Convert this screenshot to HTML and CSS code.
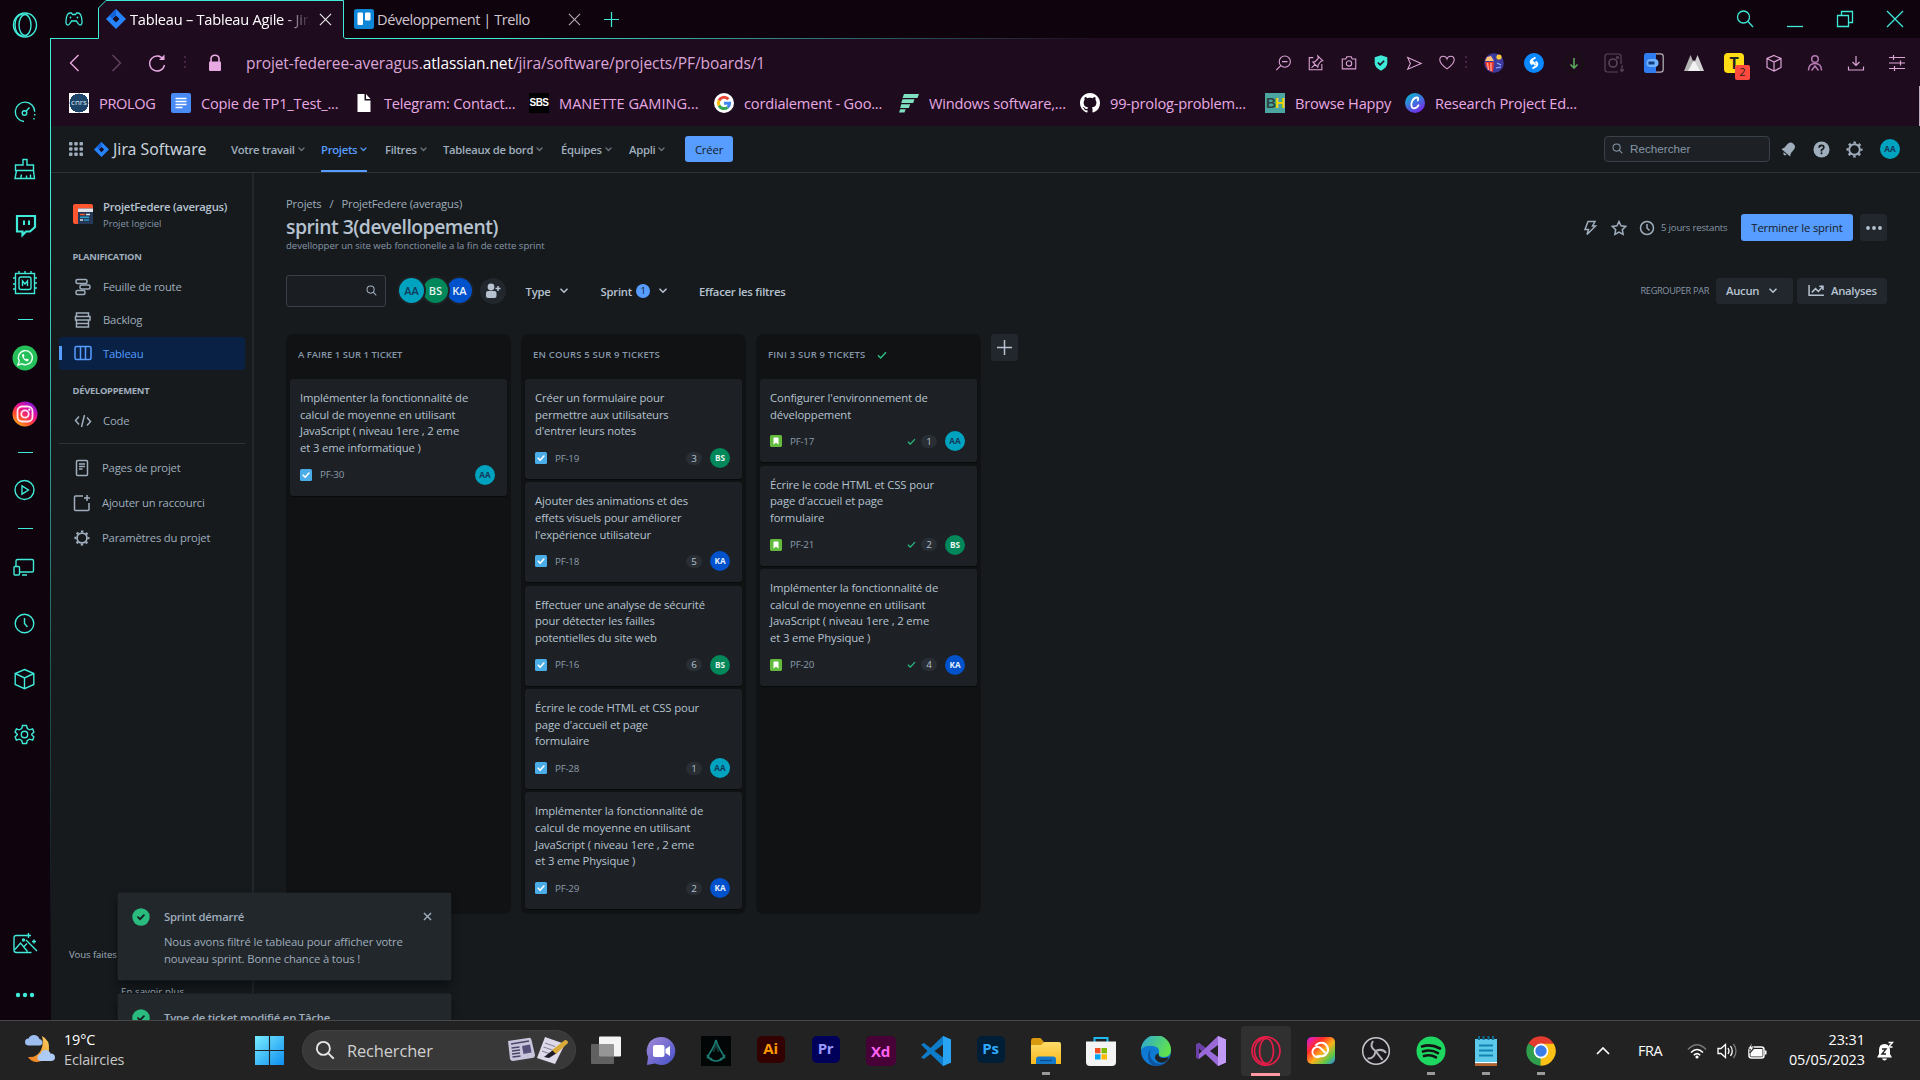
FILE: index.html
```html
<!DOCTYPE html>
<html lang="fr">
<head>
<meta charset="utf-8">
<title>Tableau – Tableau Agile - Jira</title>
<link rel="stylesheet" href="styles.css">
</head>
<body>
<svg class="defs" aria-hidden="true">
  <defs>
    <linearGradient id="fadeX" gradientUnits="userSpaceOnUse" x1="500" y1="0" x2="1100" y2="0"><stop offset="0" stop-color="#3fead8"/><stop offset="1" stop-color="#3fead8" stop-opacity="0"/></linearGradient>
    <linearGradient id="fadeY" gradientUnits="userSpaceOnUse" x1="0" y1="200" x2="0" y2="960"><stop offset="0" stop-color="#3fead8"/><stop offset="1" stop-color="#3fead8" stop-opacity="0"/></linearGradient>
    <linearGradient id="insta" x1=".1" y1="1" x2=".8" y2="0"><stop offset="0" stop-color="#ffc21a"/><stop offset=".35" stop-color="#ff4a2e"/><stop offset=".65" stop-color="#e6109a"/><stop offset="1" stop-color="#7a1be0"/></linearGradient>
    <linearGradient id="win" x1="0" y1="0" x2="1" y2="1"><stop offset="0" stop-color="#78ecff"/><stop offset="1" stop-color="#0e8ff0"/></linearGradient>
    <linearGradient id="teams" x1="0" y1="0" x2="1" y2="1"><stop offset="0" stop-color="#a58bd8"/><stop offset="1" stop-color="#4450c8"/></linearGradient>
    <linearGradient id="edgeG" x1="0" y1="0" x2="1" y2=".4"><stop offset="0" stop-color="#2ba6dd"/><stop offset="1" stop-color="#5fe04e"/></linearGradient>
    <linearGradient id="cc" x1="0" y1="0" x2="1" y2="1"><stop offset="0" stop-color="#d41cf0"/><stop offset=".3" stop-color="#ff2a2a"/><stop offset=".55" stop-color="#ffb01a"/><stop offset=".8" stop-color="#5ac84a"/><stop offset="1" stop-color="#2a80ff"/></linearGradient>
    <linearGradient id="canva" x1="0" y1="0" x2=".6" y2="1"><stop offset="0" stop-color="#00c4d0"/><stop offset="1" stop-color="#7330e8"/></linearGradient>
    <linearGradient id="fold" x1="0" y1="0" x2="0" y2="1"><stop offset="0" stop-color="#ffdc6a"/><stop offset="1" stop-color="#f8b81c"/></linearGradient>
    <linearGradient id="moon" x1="1" y1="0" x2="0" y2="1"><stop offset="0" stop-color="#f7d060"/><stop offset="1" stop-color="#f07a1a"/></linearGradient>
    <symbol id="chev" viewBox="0 0 8 6"><path d="M1 1.2l3 3 3-3" fill="none" stroke="currentColor" stroke-width="1.6" stroke-linecap="round"/></symbol>
    <symbol id="x" viewBox="0 0 14 14"><path d="M1 1l12 12M13 1L1 13" fill="none" stroke="currentColor" stroke-width="1.2"/></symbol>
    <symbol id="xb" viewBox="0 0 14 14"><path d="M1.500 1.500l11 11M12.500 1.500l-11 11" fill="none" stroke="currentColor" stroke-width="2.200"/></symbol>
    <symbol id="mag" viewBox="0 0 16 16"><g fill="none" stroke="currentColor" stroke-width="1.5"><circle cx="6.7" cy="6.7" r="5.2"/><path d="M10.5 10.5l4.5 4.5"/></g></symbol>
    <symbol id="jira" viewBox="0 0 20 20"><path d="M10 0l10 10-10 10L0 10z" fill="#2684ff"/><path d="M10 6.5L13.5 10 10 13.500 6.500 10z" fill="#1b0d20"/><path d="M10 0v6.500L6.500 10 3.300 6.700z" fill="#1460d8"/></symbol>
    <symbol id="task" viewBox="0 0 12 12"><rect width="12" height="12" rx="1.500" fill="#4bade8"/><path d="M3.200 6.200l2 2 3.700-4.200" fill="none" stroke="#fff" stroke-width="1.600" stroke-linecap="round"/></symbol>
    <symbol id="story" viewBox="0 0 12 12"><rect width="12" height="12" rx="1.500" fill="#63ba3c"/><path d="M3.500 3.300q0-.8.8-.8h3.400q.8 0 .8.800v6.500L6 7.500 3.500 9.800z" fill="#fff"/></symbol>
    <symbol id="tick" viewBox="0 0 10 8"><path d="M1 4.300L3.600 7 9 1.300" fill="none" stroke="#2abb7f" stroke-width="1.500"/></symbol>
    <symbol id="ok" viewBox="0 0 18 18"><circle cx="9" cy="9" r="8.700" fill="#2abb7f"/><path d="M6 9.100l2.100 2.100 3.800-4" fill="none" stroke="#161a1d" stroke-width="1.800" stroke-linecap="round"/></symbol>
    <symbol id="cog" viewBox="0 0 18 18"><circle cx="9" cy="9" r="5.600" fill="none" stroke="currentColor" stroke-width="2"/><circle cx="9" cy="9" r="7.400" fill="none" stroke="currentColor" stroke-width="2.200" stroke-dasharray="2.700 3.110" stroke-dashoffset="1.350"/></symbol>
  </defs>
</svg>

<div class="screen">
  <div class="browser">
    <aside class="rail">
      <svg class="ri opera" viewBox="0 0 26 26"><ellipse cx="13" cy="13" rx="11.500" ry="12"/><ellipse cx="13" cy="13" rx="6" ry="10.500"/><path d="M11 1.500C5 3 3 8 3 13s2.500 10 8 11.500"/></svg>
      <svg class="ri gauge" viewBox="0 0 26 26"><path d="M12 22.500a9.700 9.700 0 1 1 10.700-9.700"/><circle cx="12.500" cy="14" r="2.300"/><path d="M14 12.300l3.500-3.800M22.700 15v1.500M22 19v1.500"/></svg>
      <svg class="ri broom" viewBox="0 0 26 26"><path d="M11 3.500h4V9h6.500v5.500h-18V9H11zM4.500 14.500l-1.500 8h19.500l-1-8M9.500 18.500l-.8 4M14.500 19.500v3M18.500 18.500v4"/></svg>
      <svg class="ri twitch" viewBox="0 0 26 26"><path d="M5 4h18v11l-5 4.500h-4L10.500 23v-3.500H5z" stroke-width="2.200"/><path d="M12 8.500v4.500M17 8.500v4.500" stroke-width="2"/></svg>
      <svg class="ri chip" viewBox="0 0 26 26"><rect x="3.500" y="3.500" width="19" height="20"/><rect x="7" y="7" width="12" height="12.500" rx="2"/><path d="M10.500 16v-5l2.500 3 2.500-3v5M7 3.500V1M13 3.500V1M19 3.500V1M3.500 8H1M3.500 14H1M3.500 19H1M22.500 8H25M22.500 13H25M22.500 18H25"/></svg>
      <i class="dash d1"></i>
      <svg class="ri wa" viewBox="0 0 26 26"><circle cx="13" cy="13" r="12.500" fill="#25c05a" stroke="none"/><path d="M6 20l1.200-4A7 7 0 1 1 10 18.800z" stroke="#e8fff0"/><path d="M10 9.500c-.5 3 3 7 6 6.800l.8-1.800-2-1-1 .8c-1-.5-1.800-1.500-2.200-2.300l.9-.9-.7-2z" fill="#fff" stroke="none"/></svg>
      <svg class="ri ig" viewBox="0 0 26 26"><circle cx="13" cy="13" r="12.500" fill="url(#insta)" stroke="none"/><g stroke="#ffe6f0" stroke-width="1.800"><rect x="5.500" y="5.500" width="15" height="15" rx="4.500"/><circle cx="13" cy="13" r="3.700"/></g><circle cx="17.300" cy="8.700" r="1.100" fill="#fff" stroke="none"/></svg>
      <i class="dash d2"></i>
      <svg class="ri play" viewBox="0 0 26 26"><circle cx="12.500" cy="13" r="9.500"/><path d="M10 8.800l6.500 4.200-6.500 4.200z"/></svg>
      <i class="dash d3"></i>
      <svg class="ri devices" viewBox="0 0 26 26"><path d="M4 11V6q0-1.500 1.500-1.500H20q1.500 0 1.500 1.500v9.500q0 1.500-1.500 1.500H8M10 20h5"/><rect x="2" y="11.500" width="5.500" height="8.500" rx="1"/></svg>
      <svg class="ri clock" viewBox="0 0 26 26"><circle cx="12.500" cy="13.500" r="9.300"/><path d="M12.500 8v5.500l3 3.500"/></svg>
      <svg class="ri box" viewBox="0 0 26 26"><path d="M12.500 3.500l9.300 4v11l-9.300 4.200-9.300-4.200v-11zM3.200 7.500l9.300 4.500 9.300-4.500M12.500 12v10.700"/></svg>
      <svg class="ri gear" viewBox="0 0 26 26"><circle cx="12.500" cy="13.500" r="3.200"/><path d="M10.500 4.500h4l.8 3 2.400 1.300 2.900-.9 1.300 3.200-2.200 2.200v.4l2.200 2.200-1.300 3.200-2.900-.9-2.400 1.300-.8 3h-4l-.8-3-2.400-1.300-2.900.9-1.300-3.200 2.200-2.200v-.4l-2.200-2.200 1.300-3.200 2.900.9 2.400-1.300z"/></svg>
      <svg class="ri pic" viewBox="0 0 26 26"><path d="M15 4.500H4.500Q2 4.500 2 7v12q0 2.500 2.500 2.500h15M3 18.500l5.500-6.500 7 8.500M12 15.500l3-3M14 9l11 11"/><circle cx="11.500" cy="9" r="1"/><path d="M16.500 2v5M14 4.500h5M22 8.500v4M20 10.500h4"/></svg>
      <svg class="ri more" viewBox="0 0 26 26"><g fill="#3fead8" stroke="none"><circle cx="6" cy="13" r="2.200"/><circle cx="13" cy="13" r="2.200"/><circle cx="20" cy="13" r="2.200"/></g></svg>
    </aside>

    <div class="window">
      <header class="chrome">
        <div class="tabs">
          <svg class="pad" viewBox="0 0 18 14"><path d="M5 1h1.500l1 1.500h3L11.500 1H13q3.500 0 4 8 .2 4-1.800 4-1.500 0-3.700-4h-5q-2.200 4-3.700 4-2 0-1.800-4Q1.500 1 5 1z" fill="none" stroke="#3fead8" stroke-width="1.300"/><circle cx="5.500" cy="5.500" r=".9" fill="#3fead8"/><circle cx="12.500" cy="5.500" r=".9" fill="#3fead8"/></svg>
          <div class="tab active"><svg class="fav"><use href="#jira"/></svg><span class="label">Tableau – Tableau Agile - Jira</span><svg class="close"><use href="#x"/></svg></div>
          <div class="tab"><svg class="fav" viewBox="0 0 20 20"><rect width="20" height="20" rx="2.500" fill="#0e86d8"/><rect x="3.500" y="3.500" width="5.500" height="12.500" rx="1" fill="#fff"/><rect x="11" y="3.500" width="5.500" height="8" rx="1" fill="#fff"/></svg><span class="label">Développement | Trello</span><svg class="close"><use href="#x"/></svg></div>
          <svg class="plus" viewBox="0 0 16 16"><path d="M8 0v16M0 8h16" stroke="#3fead8" stroke-width="1.300"/></svg>
          <div class="winctl">
            <svg viewBox="0 0 18 18"><circle cx="7.500" cy="7" r="6"/><path d="M12 11.500l5 5.500"/></svg>
            <svg viewBox="0 0 18 18"><path d="M1 16.500h16"/></svg>
            <svg viewBox="0 0 18 18"><path d="M1.500 5.500h11v11h-11zM5.500 5.500v-4h11v11h-4"/></svg>
            <svg viewBox="0 0 18 18"><path d="M1 1l16 16M17 1L1 17"/></svg>
          </div>
        </div>
        <div class="address">
          <div class="navbtns">
            <svg viewBox="0 0 20 20"><path d="M13.500 2L5.500 10l8 8"/></svg>
            <svg viewBox="0 0 20 20" class="off"><path d="M6.500 2l8 8-8 8"/></svg>
            <svg viewBox="0 0 20 20"><path d="M16.500 6.500A7.500 7.500 0 1 0 17.500 12"/><path d="M12 7h5.500V1.500z" fill="#e7a9e2" stroke="none"/></svg>
          </div>
          <i class="dots"></i>
          <svg class="lock" viewBox="0 0 14 18"><path d="M3 9V5q0-3.800 4-3.800T11 5v4" fill="none" stroke="#e7a9e2" stroke-width="1.600"/><rect x="1" y="7.500" width="12" height="9.500" rx="1" fill="#e7a9e2"/></svg>
          <div class="url">projet-federee-averagus.<b>atlassian.net</b>/jira/software/projects/PF/boards/1</div>
          <div class="tools small">
            <svg viewBox="0 0 20 20"><circle cx="12" cy="8.500" r="6.200"/><path d="M7.500 13l-5 5M9 8.500h6"/></svg>
            <svg viewBox="0 0 20 20"><path d="M7 4H2.500v13.500h14V11M12 2l5.500 5.500-2 .5-3 4-.5 2.500L6.500 9 9 8.500l3.500-3.500zM9 11.500L5 15.500"/></svg>
            <svg viewBox="0 0 20 20"><path d="M2.500 5.500h4l1-2.500h5l1 2.500h4v11h-15z"/><circle cx="10" cy="10.500" r="3"/></svg>
            <svg viewBox="0 0 20 20"><path d="M10 1.500l7 2v6.500q0 5-7 8.500-7-3.500-7-8.500V3.500z" fill="#3fead8" stroke="none"/><path d="M6.500 9.500l2.500 2.500 4.500-4.500" stroke="#1e0b1e" stroke-width="1.800"/></svg>
            <svg viewBox="0 0 20 20"><path d="M3 4l15 6.500L3 17l3-6.500z"/></svg>
            <svg viewBox="0 0 20 20"><path d="M10 16.500Q2 11 2 6.500 2 2.500 5.800 2.500 9 2.500 10 5.500 11 2.500 14.200 2.500 18 2.500 18 6.500 18 11 10 16.500z"/></svg>
          </div>
          <i class="dots"></i>
          <div class="tools ext">
            <svg viewBox="0 0 20 20"><circle cx="10" cy="10" r="9.800" fill="#3c3a9e" stroke="none"/><path d="M1 9h9l-1 10Q2 17 1 9z" fill="#f0382a" stroke="none"/><path d="M3.500 10l1 7M7 10v8" stroke="#ffb0a0"/><path d="M1 8l2-4 4-1 3 5z" fill="#ffc27a" stroke="none"/><circle cx="15" cy="4" r="2.600" fill="#ffc83a" stroke="none"/><path d="M13 10l4 2M12 15l5-1" stroke="#8fb4ff"/></svg>
            <svg viewBox="0 0 20 20"><circle cx="10" cy="10" r="10" fill="#0a88ff" stroke="none"/><path d="M11.500 4.500l-4 2.500q-2 2.500 1 4.500M8.500 15.500l4-2.500q2-2.500-1-4.500M8 8l3.500 4" stroke="#fff" stroke-width="2"/></svg>
            <svg viewBox="0 0 20 20"><circle cx="10" cy="10" r="9.300" stroke="#17120f" stroke-dasharray="8 3" stroke-width="1.500"/><path d="M10 5v10M6.500 11.500L10 15l3.500-3.500" stroke="#5aa85a" stroke-width="1.600"/></svg>
            <svg viewBox="0 0 20 20"><path d="M14 19H3.500Q1 19 1 16.500v-13Q1 1 3.500 1h11Q17 1 17 3.500V11M18 12v6M16 16.500l2 2 2-2" stroke="#594659"/><circle cx="9" cy="10" r="4" stroke="#594659" stroke-width="1.600"/><circle cx="13.500" cy="4.500" r="1" stroke="#594659"/></svg>
            <svg viewBox="0 0 20 20"><path d="M10 .8h6.500Q19.200.8 19.200 3.500v13q0 2.700-2.700 2.700H10" stroke="#b8b4b8"/><path d="M2.500 0H12v20H2.500Q0 20 0 17.500v-15Q0 0 2.500 0z" fill="#2f7df0" stroke="none"/><rect x="2.500" y="6" width="12" height="8" rx="4" fill="#70b2ff" stroke="none"/><path d="M4.500 8.500h6v3h-6z" fill="#123a80" stroke="none"/></svg>
            <svg viewBox="0 0 20 20"><path d="M0 18L6.500 2l6.500 16z" fill="#b4b4b4" stroke="none"/><path d="M7 18l6.500-16L20 18z" fill="#d0d0d0" stroke="none"/><path d="M4 18L10 7l6 11z" fill="#f2f2f2" stroke="none"/></svg>
            <div class="tx">T<em>2</em></div>
            <svg viewBox="0 0 20 20"><path d="M10 2.500l7 3v9l-7 3.500-7-3.500v-9zM3 5.500l7 3.500 7-3.500M10 9v9"/></svg>
            <svg viewBox="0 0 20 20"><g stroke="#b679b4" stroke-width="1.500"><circle cx="10" cy="6" r="3.300"/><path d="M3.500 17.500q0-7 6.500-7t6.500 7M6.500 17.500l3.500-4.500 3.500 4.500"/></g></svg>
            <svg viewBox="0 0 20 20"><path d="M10 3v9.500M6.500 9l3.500 3.500L13.500 9M2.500 13.500V17h15v-3.500"/></svg>
            <svg viewBox="0 0 20 20"><path d="M2 4.500h16M2 10h16M2 15.500h16M6.500 2v5M13.500 7.500v5M7.500 13v5"/></svg>
          </div>
        </div>
        <div class="bookmarks">
          <a><span class="bi cnrs">cnrs</span>PROLOG</a>
          <a><svg class="bi" viewBox="0 0 20 20"><rect width="20" height="20" rx="2" fill="#4a8af4"/><path d="M4.500 5.500h11M4.500 8.500h11M4.500 11.500h11M4.500 14.500h7" stroke="#fff" stroke-width="1.700"/></svg>Copie de TP1_Test_...</a>
          <a><svg class="bi" viewBox="0 0 20 20"><path d="M3.500 1h7v6.500h6V19h-13z" fill="#fff"/><path d="M12 1l4.500 5H12z" fill="#fff"/></svg>Telegram: Contact...</a>
          <a><span class="bi sbs">SBS</span>MANETTE GAMING...</a>
          <a><svg class="bi" viewBox="0 0 20 20"><circle cx="10" cy="10" r="10" fill="#fff"/><g fill="none" stroke-width="3"><path d="M14.300 6.300A5.600 5.600 0 0 0 5 7.500" stroke="#ea4335"/><path d="M5 7.500a5.600 5.600 0 0 0 0 5" stroke="#fbbc05"/><path d="M5 12.500a5.600 5.600 0 0 0 8.600 1.800" stroke="#34a853"/><path d="M13.600 14.300q2-1.500 2-4.100H10" stroke="#4285f4"/></g></svg>cordialement - Goo...</a>
          <a><svg class="bi" viewBox="0 0 20 20"><path d="M5 1h15l-1.500 4H3.500zM3.500 6.300h12l-1.300 3.700H2.200zM2.200 11.300h9L9.800 15H1.200zM1.200 16.200h5.500L5.500 19.500H0z" fill="#7fe0c0"/></svg>Windows software,...</a>
          <a><svg class="bi" viewBox="0 0 16 16"><path fill="#fff" d="M8 0C3.580 0 0 3.580 0 8c0 3.540 2.290 6.530 5.470 7.590.4.070.55-.17.55-.38 0-.19-.01-.82-.01-1.490-2.010.37-2.530-.49-2.690-.94-.09-.23-.48-.94-.82-1.130-.28-.15-.68-.52-.01-.53.63-.01 1.080.58 1.230.82.72 1.210 1.870.87 2.330.66.07-.52.28-.87.51-1.070-1.780-.2-3.640-.89-3.640-3.950 0-.87.31-1.590.82-2.150-.08-.2-.36-1.020.08-2.120 0 0 .67-.21 2.200.82.64-.18 1.320-.27 2-.27s1.360.09 2 .27c1.530-1.040 2.200-.82 2.200-.82.44 1.100.16 1.920.08 2.120.51.56.82 1.270.82 2.150 0 3.070-1.870 3.750-3.650 3.950.29.25.54.73.54 1.480 0 1.070-.01 1.930-.01 2.200 0 .21.15.46.55.38A8.010 8.010 0 0 0 16 8c0-4.420-3.580-8-8-8z"/></svg>99-prolog-problem...</a>
          <a><span class="bi bh">B<i>H</i></span>Browse Happy</a>
          <a><svg class="bi" viewBox="0 0 20 20"><circle cx="10" cy="10" r="10" fill="url(#canva)"/><path d="M12.800 7.500q1.200-3-1-3-4 .5-5.300 5.500-.8 5.200 2.500 5.300 2.800 0 4.500-3" fill="none" stroke="#fff" stroke-width="1.800" stroke-linecap="round"/></svg>Research Project Ed...</a>
        </div>
      </header>

      <div class="app">
        <nav class="topnav">
          <svg class="grid" viewBox="0 0 14 14"><g fill="#9fadbc"><rect width="3.500" height="3.500" rx="1"/><rect x="5.250" width="3.500" height="3.500" rx="1"/><rect x="10.500" width="3.500" height="3.500" rx="1"/><rect y="5.250" width="3.500" height="3.500" rx="1"/><rect x="5.250" y="5.250" width="3.500" height="3.500" rx="1"/><rect x="10.500" y="5.250" width="3.500" height="3.500" rx="1"/><rect y="10.500" width="3.500" height="3.500" rx="1"/><rect x="5.250" y="10.500" width="3.500" height="3.500" rx="1"/><rect x="10.500" y="10.500" width="3.500" height="3.500" rx="1"/></g></svg>
          <svg class="jlogo"><use href="#jira"/></svg>
          <span class="jname">Jira Software</span>
          <div class="links">
            <a>Votre travail<svg><use href="#chev"/></svg></a>
            <a class="on">Projets<svg><use href="#chev"/></svg></a>
            <a>Filtres<svg><use href="#chev"/></svg></a>
            <a>Tableaux de bord<svg><use href="#chev"/></svg></a>
            <a>Équipes<svg><use href="#chev"/></svg></a>
            <a>Appli<svg><use href="#chev"/></svg></a>
          </div>
          <button class="primary create">Créer</button>
          <div class="navsearch"><svg><use href="#mag"/></svg>Rechercher</div>
          <div class="navicons">
            <svg viewBox="0 0 18 18"><g transform="rotate(40 9 9)" fill="#9fadbc"><path d="M9 1q4.500 0 4.500 5v4.500L15 13.500H3l1.500-3V6Q4.500 1 9 1z"/><path d="M7 14.500h4q-.5 2-2 2t-2-2z"/></g></svg>
            <svg viewBox="0 0 18 18"><circle cx="9" cy="9" r="8.500" fill="#9fadbc"/><path d="M6.500 7.200Q6.500 4.700 9 4.700T11.500 7Q11.500 8.500 9 9.500v1.500" fill="none" stroke="#161a1d" stroke-width="1.800"/><circle cx="9" cy="13" r="1.100" fill="#161a1d"/></svg>
            <svg><use href="#cog"/></svg>
            <span class="av aa">AA</span>
          </div>
        </nav>

        <div class="body">
          <aside class="side">
            <div class="project">
              <svg viewBox="0 0 20 20"><rect width="20" height="20" rx="2" fill="#ff5630"/><path d="M5 4.500h15V20H5z" fill="#253858"/><path d="M5 4.500h15V8H5z" fill="#dfe1e6"/><path d="M7 10.500h5" stroke="#ff5630" stroke-width="1.400"/><path d="M7 13.200h9M11 16h5" stroke="#2a9cc8" stroke-width="1.400"/><path d="M13 10.500h4M7 16h3" stroke="#dfe1e6" stroke-width="1.400"/></svg>
              <div><strong>ProjetFedere (averagus)</strong><span>Projet logiciel</span></div>
            </div>
            <h4 class="h-plan">PLANIFICATION</h4>
            <a class="item"><svg viewBox="0 0 18 18"><rect x="2" y="1.500" width="11" height="4" rx="1.500"/><rect x="6" y="7" width="10" height="4" rx="1.500"/><rect x="2" y="12.500" width="9" height="4" rx="1.500"/></svg>Feuille de route</a>
            <a class="item"><svg viewBox="0 0 18 18"><path d="M2.500 2h12v3.500h-12zM1.500 5.500h14.500V9H1.500zM2.500 9v7h12V9M2.500 12.500h12"/></svg>Backlog</a>
            <a class="item sel"><svg viewBox="0 0 18 18"><rect x="1" y="2.500" width="16" height="13" rx="1.500"/><path d="M6.500 3v12M11.500 3v12"/></svg>Tableau</a>
            <h4 class="h-dev">DÉVELOPPEMENT</h4>
            <a class="item code"><svg viewBox="0 0 18 18"><path d="M5 4.500L1.500 8.500l3.500 4M13 5.500l3.500 4-3.500 4M10.500 3L7.500 15"/></svg>Code</a>
            <hr>
            <a class="item low"><svg viewBox="0 0 18 18"><rect x="3.500" y="1.500" width="11" height="15" rx="1"/><path d="M6 5h6M6 7.500h6M6 10h3.500"/></svg>Pages de projet</a>
            <a class="item low"><svg viewBox="0 0 18 18"><path d="M10 2H2.500Q1.500 2 1.500 3v12.500q0 1 1 1h12.500q1 0 1-1V9M14 1v6M11 4h6"/></svg>Ajouter un raccourci</a>
            <a class="item low"><svg class="solid"><use href="#cog"/></svg>Paramètres du projet</a>
            <div class="foot"><p>Vous faites</p><a>En savoir plus</a></div>
          </aside>

          <main class="main">
            <div class="crumbs"><span>Projets</span><span>/</span><span>ProjetFedere (averagus)</span></div>
            <div class="titlerow">
              <div><h1>sprint 3(devellopement)</h1><p class="goal">devellopper un site web fonctionelle a la fin de cette sprint</p></div>
              <div class="actions">
                <svg viewBox="0 0 16 16"><path d="M6 1.500h7L10.500 6h3L5 14.500 6.500 9.500H3z"/></svg>
                <svg viewBox="0 0 16 16"><path d="M8 1.500l2 4.300 4.700.6-3.400 3.300.8 4.700L8 12.200l-4.100 2.200.8-4.700L1.300 6.400 6 5.800z"/></svg>
                <svg viewBox="0 0 16 16"><circle cx="8" cy="8" r="6.500"/><path d="M8 4v4l2.500 2.500"/></svg>
                <span class="left">5 jours restants</span>
                <button class="primary finish">Terminer le sprint</button>
                <button class="btn dots3"><svg viewBox="0 0 16 4"><circle cx="2" cy="2" r="1.900"/><circle cx="8" cy="2" r="1.900"/><circle cx="14" cy="2" r="1.900"/></svg></button>
              </div>
            </div>
            <div class="filters">
              <div class="fsearch"><svg><use href="#mag"/></svg></div>
              <div class="people"><span class="av aa">AA</span><span class="av bs">BS</span><span class="av ka">KA</span></div>
              <span class="adduser"><svg viewBox="0 0 16 16"><circle cx="6" cy="4" r="3.400"/><rect x="1" y="8" width="10.500" height="7" rx="2"/><path d="M13 3v5M10.500 5.500h5" stroke="#b6c2cf" stroke-width="1.500"/></svg></span>
              <span class="f type">Type<svg><use href="#chev"/></svg></span>
              <span class="f sprint">Sprint<em>1</em><svg><use href="#chev"/></svg></span>
              <span class="f">Effacer les filtres</span>
              <span class="group">REGROUPER PAR</span>
              <button class="btn none">Aucun<svg><use href="#chev"/></svg></button>
              <button class="btn stats"><svg viewBox="0 0 18 14"><path d="M1 1v11h16M4 9l4-4 3 3 4.500-5M12 2.500h4v4"/></svg>Analyses</button>
            </div>

            <div class="board">
              <section class="col">
                <h5>A FAIRE 1 SUR 1 TICKET</h5>
                <article class="card"><p>Implémenter la fonctionnalité de<br>calcul de moyenne en utilisant<br>JavaScript ( niveau 1ere , 2 eme<br>et 3 eme informatique )</p><div class="cf"><svg class="ty"><use href="#task"/></svg><b>PF-30</b><span class="av aa">AA</span></div></article>
              </section>
              <section class="col wide">
                <h5>EN COURS 5 SUR 9 TICKETS</h5>
                <article class="card"><p>Créer un formulaire pour<br>permettre aux utilisateurs<br>d'entrer leurs notes</p><div class="cf"><svg class="ty"><use href="#task"/></svg><b>PF-19</b><em>3</em><span class="av bs">BS</span></div></article>
                <article class="card"><p>Ajouter des animations et des<br>effets visuels pour améliorer<br>l'expérience utilisateur</p><div class="cf"><svg class="ty"><use href="#task"/></svg><b>PF-18</b><em>5</em><span class="av ka">KA</span></div></article>
                <article class="card"><p>Effectuer une analyse de sécurité<br>pour détecter les failles<br>potentielles du site web</p><div class="cf"><svg class="ty"><use href="#task"/></svg><b>PF-16</b><em>6</em><span class="av bs">BS</span></div></article>
                <article class="card"><p>Écrire le code HTML et CSS pour<br>page d'accueil et page<br>formulaire</p><div class="cf"><svg class="ty"><use href="#task"/></svg><b>PF-28</b><em>1</em><span class="av aa">AA</span></div></article>
                <article class="card"><p>Implémenter la fonctionnalité de<br>calcul de moyenne en utilisant<br>JavaScript ( niveau 1ere , 2 eme<br>et 3 eme Physique )</p><div class="cf"><svg class="ty"><use href="#task"/></svg><b>PF-29</b><em>2</em><span class="av ka">KA</span></div></article>
              </section>
              <section class="col wide">
                <h5>FINI 3 SUR 9 TICKETS<svg><use href="#tick"/></svg></h5>
                <article class="card"><p>Configurer l'environnement de<br>développement</p><div class="cf"><svg class="ty"><use href="#story"/></svg><b>PF-17</b><svg class="tk"><use href="#tick"/></svg><em>1</em><span class="av aa">AA</span></div></article>
                <article class="card"><p>Écrire le code HTML et CSS pour<br>page d'accueil et page<br>formulaire</p><div class="cf"><svg class="ty"><use href="#story"/></svg><b>PF-21</b><svg class="tk"><use href="#tick"/></svg><em>2</em><span class="av bs">BS</span></div></article>
                <article class="card"><p>Implémenter la fonctionnalité de<br>calcul de moyenne en utilisant<br>JavaScript ( niveau 1ere , 2 eme<br>et 3 eme Physique )</p><div class="cf"><svg class="ty"><use href="#story"/></svg><b>PF-20</b><svg class="tk"><use href="#tick"/></svg><em>4</em><span class="av ka">KA</span></div></article>
              </section>
              <button class="btn addcol"><svg viewBox="0 0 16 16"><path d="M8 0v16M0 8h16"/></svg></button>
            </div>
          </main>
        </div>
      </div>
    </div>

    <svg class="outline" viewBox="0 0 1920 1020"><path d="M50.500 38V1020" stroke="url(#fadeY)"/><path d="M50 38.500H98.500V8L106 .5H343.500V37L345 38.500H1100" stroke="url(#fadeX)"/></svg>
    <i class="edge"></i>
    <div class="toasts">
      <div class="toast"><svg class="ok"><use href="#ok"/></svg><div><strong>Sprint démarré</strong><p>Nous avons filtré le tableau pour afficher votre<br>nouveau sprint. Bonne chance à tous !</p></div><svg class="tc"><use href="#xb"/></svg></div>
      <div class="toast"><svg class="ok"><use href="#ok"/></svg><div><strong>Type de ticket modifié en Tâche</strong></div></div>
    </div>
  </div>

  <footer class="taskbar">
    <div class="weather">
      <svg viewBox="0 0 30 30"><path d="M17 2q8 4 7 14-2 11-12 12-6 0-9-5 9 1 13-7 3-7 1-14z" fill="url(#moon)"/><path d="M3 11.500q-3-.5-3-3.500 0-3.500 3.500-3.500Q5 1 9 1t5.500 4Q17.500 6 17.500 8.500t-3 3z" fill="#9dbcf0"/><path d="M15.500 27q-3-.5-3-3.500 0-3 3-3.500 1-4 5-4t5 3.500q4.500 0 4.500 4 0 3-3.500 3.500z" fill="#aecbf6"/></svg>
      <div><span>19°C</span><span class="dim">Eclaircies</span></div>
    </div>
    <svg class="start" viewBox="0 0 30 30"><path d="M0 0h14.400v14.400H0zM15.600 0H30v14.400H15.600zM0 15.600h14.400V30H0zM15.600 15.600H30V30H15.600z" fill="url(#win)"/></svg>
    <div class="wsearch"><svg class="m"><use href="#mag"/></svg><span>Rechercher</span>
      <svg class="deco" viewBox="0 0 62 28"><path d="M1 5l20-3q3-1 3.500 2L28 19q0 3-3 3L6 25q-2.500 0-3-2z" fill="#c9c4dc"/><path d="M4 8l18-3M5 18l8-1M5.500 21l8-1M4.500 12l8-1M5 15l8-1" stroke="#4a4668" stroke-width="1.600"/><path d="M15 10l8-1.500 1.500 8-8 1.500z" fill="#55507a"/><path d="M38 1l20 7-10 20-18-6z" fill="#dedaea"/><path d="M38 7l10 3.500M36.500 11l9 3M35 15l7 2.500" stroke="#8a86a0" stroke-width="1.200"/><path d="M37 21l9-7 4 3-8 5z" fill="#1c1c26"/><path d="M45 14L58 4q3 0 3 3L49 18z" fill="#d9a93a"/></svg>
    </div>
    <div class="apps">
      <span><svg viewBox="0 0 30 30"><rect x="8" y="0.500" width="22" height="20" rx="1" fill="#f4f4f4"/><rect x="0" y="8" width="23" height="20" rx="1" fill="#777" opacity=".75"/></svg></span>
      <span><svg viewBox="0 0 30 30"><path d="M15 1a14 14 0 1 1-6 26.500L1 29l1-8A14 14 0 0 1 15 1z" fill="url(#teams)"/><rect x="7" y="9" width="11.500" height="12" rx="2" fill="#fff"/><path d="M19.500 13l4.500-3v10l-4.500-3z" fill="#fff"/></svg></span>
      <span><svg viewBox="0 0 30 30"><rect width="30" height="30" fill="#020606"/><path d="M15 4q1 5 4 9.500t4.500 8l-4.500 1.500M15 4q-1 5-4 9.500t-4.500 8L11 23M6 19l4.500 5.500M24 19l-4.500 5.500M10 23.500q5 3 10 0" fill="none" stroke="#1c7a72" stroke-width="1.700"/><path d="M15 9l-2.500 7M15 9l2.500 7" stroke="#123f3c" stroke-width="1.500"/></svg></span>
      <span><i class="adobe ai">Ai</i></span>
      <span><i class="adobe pr">Pr</i></span>
      <span><i class="adobe xd">Xd</i></span>
      <span><svg viewBox="0 0 30 30"><path d="M22 0l8 3.500v23L22 30 9.500 18 3 23 0 21.500 6.500 15 0 8.500 3 7l6.500 5z" fill="#0e7cc8"/><path d="M22 0l8 3.500v23L22 30z" fill="#28a4f2"/><path d="M22 8.500L13.500 15l8.500 6.500z" fill="#222"/></svg></span>
      <span><i class="adobe ps">Ps</i></span>
      <span class="run"><svg viewBox="0 0 30 30"><path d="M0 5q0-3 2.500-3h7l3 3.500V12H0z" fill="#d99a10"/><path d="M0 9h10l3-3h15q2 0 2 2v20H0z" fill="url(#fold)"/><path d="M5 28v-4.500q0-3 3-3h14q3 0 3 3V28z" fill="#1478c8"/><path d="M9 24.500h12" stroke="#0a4f94" stroke-width="1.400"/></svg></span>
      <span><svg viewBox="0 0 30 30"><path d="M8.500 7V2h13v5" fill="none" stroke="#20b8f0" stroke-width="2"/><path d="M0 5.500h30V26q0 4-4 4H4q-4 0-4-4z" fill="#f4f4f4"/><path d="M9 12h5.500v5.300H9z" fill="#f25022"/><path d="M15.500 12H21v5.300h-5.500z" fill="#7fba00"/><path d="M9 18.300h5.500v5.200H9z" fill="#00a4ef"/><path d="M15.500 18.300H21v5.200h-5.500z" fill="#ffb900"/></svg></span>
      <span><svg viewBox="0 0 30 30"><circle cx="15" cy="15" r="15" fill="#0f7ad4"/><path d="M0 14A15 15 0 0 1 30 14q0 7-7 7-6 0-5-4 1-6-6-7Q3 9 0 14z" fill="url(#edgeG)"/><path d="M10 13q-3 7 2 12t13 1.500Q21 30 15 30 6 28 7 19q.5-4 3-6z" fill="#0c55a0"/><path d="M17.500 17q-1 5 5.500 5 3 0 5-1.500-1 4-4 5.500-6 2-9-2t2.500-7z" fill="#222"/></svg></span>
      <span><svg viewBox="0 0 30 30"><path d="M22 0l8 3.500v23L22 30 9.500 18 3 23 0 21.500v-13L3 7l6.500 5z" fill="#9a6ad8"/><path d="M22 0l8 3.500v23L22 30z" fill="#c29af5"/><path d="M22 9l-8 6 8 6zM3 12v6l3-3z" fill="#222"/><path d="M0 8.500L3 7l6.500 5-3 3L3 12v11l-3-1.500z" fill="#6a3fa8"/></svg></span>
      <span class="act"><svg viewBox="0 0 30 30"><g fill="none" stroke="#e81c48" stroke-width="1.700"><ellipse cx="15" cy="15" rx="14" ry="14.200"/><ellipse cx="15.500" cy="15" rx="7" ry="12.500"/><path d="M14 1.500Q3.500 5 3.500 15T14 28.500"/></g></svg></span>
      <span><svg viewBox="0 0 30 30"><rect x="1" y="1" width="28" height="27" rx="5" fill="url(#cc)"/><g fill="none" stroke="#fff" stroke-width="2"><path d="M15 19.500a5 5 0 1 1-.5-7.500l5 5"/><path d="M9.500 9.800a6.800 6.800 0 1 1 6 10.500h-5"/></g></svg></span>
      <span><svg viewBox="0 0 30 30"><circle cx="15" cy="15" r="13.300" fill="#1c1a1f" stroke="#c8c8cc" stroke-width="1.500"/><path d="M12 5q-4 6 2.500 10Q22 12 25 17M14.500 15q-1 8-8 7.500M14.500 15l7 9" fill="none" stroke="#b4b4ba" stroke-width="2"/></svg></span>
      <span class="run"><svg viewBox="0 0 30 30"><circle cx="15" cy="15" r="14.500" fill="#1ed760"/><path d="M6 10.500q9-3 18 2M7 15.500q8-2.500 15 1.700M8 20q6.500-2 12 1.400" fill="none" stroke="#141414" stroke-width="2.600" stroke-linecap="round"/></svg></span>
      <span class="run"><svg viewBox="0 0 30 30"><path d="M4 3h22v23H4z" fill="#5cc8ea"/><path d="M4 26h22v1.500H4z" fill="#fff"/><path d="M4 27.500h22V30H4z" fill="#b0622a"/><path d="M8 0v4M12.500 0v4M17.500 0v4M22 0v4" stroke="#0b6c94" stroke-width="2"/><path d="M8 9.500h14M8 14.500h14M8 19.500h14" stroke="#1283b0" stroke-width="1.800"/></svg></span>
      <span class="run"><svg viewBox="0 0 30 30"><path d="M15 15L2.300 7.500A14.700 14.700 0 0 1 27.800 7.700z" fill="#e53b2e"/><path d="M15 15L2.300 7.500A14.700 14.700 0 0 0 14.500 29.700L20 18z" fill="#2f9e4c"/><path d="M15 15V7.700h12.800A14.700 14.700 0 0 1 14.500 29.700z" fill="#fbc116"/><circle cx="15" cy="15" r="7.400" fill="#fff"/><circle cx="15" cy="15" r="5.700" fill="#3b7de8"/></svg></span>
    </div>
    <svg class="up" viewBox="0 0 14 8"><path d="M1 7l6-6 6 6" fill="none" stroke="#fff" stroke-width="1.700"/></svg>
    <span class="lang">FRA</span>
    <svg class="tray wifi" viewBox="0 0 20 16"><g fill="none" stroke-width="1.600"><path d="M1 6.500q9-9.500 18 0" stroke="#777"/><path d="M4 9.500q6-6 12 0M6.800 12.200q3.200-3.200 6.400 0" stroke="#fff"/></g><circle cx="10" cy="14" r="1.600" fill="#fff"/></svg>
    <svg class="tray vol" viewBox="0 0 20 16"><path d="M1 5.500h3L8.500 1.500v13L4 10.500H1z" fill="none" stroke="#fff" stroke-width="1.300"/><g fill="none" stroke-width="1.300"><path d="M11 5q2 3 0 6M13.500 3q3.500 5 0 10" stroke="#fff"/><path d="M16.500 1q5 7 0 14" stroke="#777"/></g></svg>
    <svg class="tray" viewBox="0 0 20 16"><rect x="2" y="4" width="15" height="11" rx="2.500" fill="none" stroke="#fff" stroke-width="1.500"/><path d="M7 6h8.500v7.500h-12V10z" fill="#fff"/><path d="M18 7.500h1.500v4H18z" fill="#fff"/><path d="M5 0L1 6h2.500L2.500 10 7 4H4.500z" fill="#fff" stroke="#222" stroke-width=".6"/></svg>
    <div class="time"><span>23:31</span><span>05/05/2023</span></div>
    <svg class="bell" viewBox="0 0 18 20"><path d="M8.500 3Q3 3 3 9v4l-2 3.500h15L14 13V9Q14 3 8.500 3zM6 17.500h5q-.5 2-2.500 2t-2.500-2z" fill="#fff"/><path d="M6 8h4L6 13h4" fill="none" stroke="#222" stroke-width="1.400"/><path d="M11 0h7v7h-5z" fill="#222"/><path d="M12.500 1.500h4L12.500 6h4" fill="none" stroke="#fff" stroke-width="1.400"/></svg>
  </footer>
</div>
</body>
</html>
```
FILE: styles.css
```css
* { box-sizing: border-box; }
html, body { margin: 0; padding: 0; }
body { background: #161a1d; font-family: "Open Sans", "Noto Sans", sans-serif; font-size: 11.3px; letter-spacing: -0.014em; color: #b6c2cf; overflow: hidden; }
h1, h4, h5, p { margin: 0; }
i, em { font-style: normal; }
svg { flex: none; display: block; }
button { border: 0; padding: 0; font: inherit; letter-spacing: inherit; color: inherit; }
.defs { position: absolute; width: 0; height: 0; }
.screen { width: 1920px; height: 1080px; display: flex; flex-direction: column; overflow: hidden; }
.browser { position: relative; height: 1020px; display: flex; overflow: hidden; }
.outline { position: absolute; left: 0; top: 0; width: 1920px; height: 1020px; pointer-events: none; fill: none; }
.edge { position: absolute; right: 0; top: 86px; width: 1px; height: 40px; background: #b9aeb9; }

/* Left rail */
.rail { width: 51px; background: #0f030d; display: flex; flex-direction: column; align-items: center; padding: 12px 1px 12px 0; }
.ri { width: 26px; height: 26px; fill: none; stroke: #3fead8; stroke-width: 1.4; }
.gauge { margin-top: 61px; }
.broom { margin-top: 31px; }
.twitch { margin-top: 30px; }
.chip { margin-top: 32px; }
.dash { width: 15px; height: 1px; background: #3fead8; }
.d1 { margin: 23px 0 25px; }
.ig { margin-top: 30px; }
.d2 { margin: 25px 0 24px; }
.d3 { margin: 25px 0 26px; }
.clock { margin-top: 29px; }
.box { margin-top: 30px; }
.gear { margin-top: 29px; }
.pic { margin-top: auto; }
.more { margin-top: 25px; }

.window { flex: 1; display: flex; flex-direction: column; min-width: 0; }

/* Browser chrome */
.chrome { height: 126px; background: #1e0b1e; }
.tabs { height: 38px; background: #0f030d; display: flex; align-items: center; padding-left: 14px; font-size: 14.6px; color: #cfc6cf; letter-spacing: -0.016em; }
.pad { width: 18px; height: 14px; margin-right: 15px; }
.tab { width: 246px; height: 38px; display: flex; align-items: center; padding-left: 10px; }
.tab .fav { width: 20px; height: 20px; margin-right: 3px; }
.tab .label { flex: 1; white-space: nowrap; overflow: hidden; letter-spacing: -0.03em; }
.tab .close { width: 13px; height: 13px; color: #b5adb5; margin-right: 9px; }
.tab.active { background: #1e0b1e; padding-left: 8px; clip-path: polygon(0 8px, 8px 0, 100% 0, 100% 100%, 0 100%); color: #fff; }
.tab.active .fav { margin-right: 4px; }
.tab.active .label { letter-spacing: -0.016em; margin-right: 8px; -webkit-mask-image: linear-gradient(90deg, #000 84%, transparent); mask-image: linear-gradient(90deg, #000 84%, transparent); }
.tab.active .close { color: #eee; margin-right: 12px; }
.plus { width: 15px; height: 15px; margin-left: 14px; }
.winctl { margin-left: auto; display: flex; gap: 32px; padding-right: 16px; }
.winctl svg { width: 18px; height: 18px; fill: none; stroke: #3fead8; stroke-width: 1.3; }
.address { height: 50px; display: flex; align-items: center; padding-left: 14px; }
.navbtns { display: flex; gap: 21px; }
.navbtns svg { width: 20px; height: 20px; fill: none; stroke: #e7a9e2; stroke-width: 1.4; }
.navbtns .off { opacity: .35; }
.dots { width: 2px; height: 14px; background: repeating-linear-gradient(#4b2347 0 2px, transparent 2px 5px); }
.navbtns + .dots { margin-left: 17px; }
.lock { width: 14px; height: 18px; margin-left: 22px; margin-right: 24px; }
.url { flex: 1; font-size: 15.5px; letter-spacing: -0.005em; color: #dba4d6; white-space: nowrap; }
.url b { font-weight: 400; color: #fff; }
.tools { display: flex; }
.tools svg { width: 20px; height: 20px; fill: none; stroke: #dba4d6; stroke-width: 1.2; margin: 0 10px; }
.tools.small svg { width: 18px; height: 18px; margin: 0 7.35px; }
.tools.small { margin-right: 2px; }
.tools.ext { margin-left: 7px; padding-right: 3px; }
.tools.ext svg:nth-child(n+9) { margin-left: 11px; }
.tx { position: relative; width: 20px; height: 20px; margin: 0 10px; border-radius: 4px; background: #ffdc14; color: #222; font: 700 16px/20px "Open Sans", sans-serif; text-align: center; }
.tx em { position: absolute; left: 11px; top: 12px; width: 15px; height: 15px; border-radius: 2px; background: #ff4a3d; font: 400 10.5px/15px "Open Sans", sans-serif; }
.bookmarks { height: 38px; padding: 0 0 8px 18px; display: grid; grid-template-columns: 102px 183px 175px 185px 185px 181px 185px 140px 200px; align-items: center; font-size: 14.6px; color: #e7a9e2; letter-spacing: -0.013em; }
.bookmarks a { display: flex; align-items: center; white-space: nowrap; }
.bookmarks a:nth-child(4) { letter-spacing: 0; }
.bookmarks a:first-child { letter-spacing: -0.025em; }
.bi { width: 20px; height: 20px; margin-right: 10px; flex: none; text-align: center; letter-spacing: 0; }
.cnrs { background: radial-gradient(circle, #1d4468 66%, #fff 68%); color: #d6e4f0; font-size: 8px; line-height: 18px; }
.sbs { background: #000; color: #fff; font: 700 10px/20px "Liberation Sans", sans-serif; letter-spacing: -0.6px; }
.bh { background: #4ba5a0; color: #2c4544; font: 700 14px/20px "Liberation Sans", sans-serif; letter-spacing: -1px; }
.bh i { color: #f2d500; }

/* Jira header */
.app { flex: 1; display: flex; flex-direction: column; min-height: 0; background: #161a1d; }
.topnav { height: 47px; border-bottom: 1px solid #2c333a; display: flex; align-items: center; padding: 0 20px 0 18px; }
.grid { width: 14px; height: 14px; }
.jlogo { width: 15px; height: 15px; margin: 0 4px 0 11px; }
.jname { width: 118px; font-family: "Noto Sans", sans-serif; font-size: 15.8px; letter-spacing: 0; color: #c7d1db; white-space: nowrap; }
.links { height: 46px; display: grid; grid-template-columns: 90px 64px 58px 118px 68px 56px; font-weight: 600; letter-spacing: -0.026em; color: #9fadbc; }
.links a { display: flex; align-items: center; justify-self: start; white-space: nowrap; }
.links svg { width: 7px; height: 5px; margin-left: 3px; opacity: .6; }
.links .on { color: #579dff; box-shadow: inset 0 -2px #579dff; }
.links .on svg { opacity: .9; }
.primary { background: #579dff; color: #161a1d; border-radius: 3px; font-weight: 500; }
.create { width: 48px; height: 26px; }
.navsearch { margin-left: auto; width: 166px; height: 26px; background: #1d2125; border: 1px solid #38414a; border-radius: 4px; display: flex; align-items: center; gap: 7px; padding: 0 0 1px 7px; color: #8696a7; font-family: "Liberation Sans", sans-serif; font-size: 11.7px; letter-spacing: 0; }
.navsearch svg { width: 11px; height: 11px; }
.navicons { display: flex; align-items: center; gap: 16px; margin-left: 10px; color: #9fadbc; }
.navicons svg { width: 17px; height: 17px; }
.navicons .av { margin-left: 1px; }
.av { width: 20px; height: 20px; border-radius: 50%; display: inline-flex; flex: none; align-items: center; justify-content: center; font-size: 8.2px; font-weight: 700; line-height: 1; letter-spacing: 0; }
.aa { background: #00a3bf; color: #12385a; }
.bs { background: #00875a; color: #e8f5ee; }
.ka { background: #0052cc; color: #e8f0fc; }

/* Project sidebar */
.body { flex: 1; display: flex; min-height: 0; }
.side { width: 203px; border-right: 2px solid #22272b; padding: 26px 7px 0 8px; color: #9fadbc; height: 820px; overflow: hidden; display: flex; flex-direction: column; }
.project { display: flex; padding-left: 14px; height: 40px; }
.project > svg { width: 20px; height: 20px; margin: 5px 10px 0 0; }
.project strong { display: block; font-weight: 600; line-height: 16px; color: #b6c2cf; letter-spacing: -0.022em; white-space: nowrap; }
.project span { display: block; font-size: 9.4px; line-height: 17px; letter-spacing: 0; color: #8696a7; }
.side h4 { font-size: 9.4px; line-height: 14px; letter-spacing: -0.03em; padding-left: 13.5px; }
.h-plan { margin: 11px 0 6px; }
.h-dev { margin: 14px 0 6px; }
.item { display: flex; align-items: center; height: 33.3px; flex: none; padding-left: 15px; border-radius: 3px; letter-spacing: -0.018em; }
.item svg { width: 18px; height: 18px; margin-right: 11px; fill: none; stroke: currentColor; stroke-width: 1.5; }
.item svg.solid { stroke: none; width: 16px; height: 16px; margin: 0 12px 0 1px; }
.sel { background: linear-gradient(#579dff, #579dff) 0 50% / 3px 14px no-repeat #082145; color: #579dff; }
.side hr { width: 100%; height: 1px; border: 0; background: #2c333a; margin: 6px 0 6px; flex: none; }
.low { height: 35px; padding-left: 14px; }
.foot { margin-top: auto; font-size: 9.6px; letter-spacing: -0.01em; padding: 0 0 0 10px; height: 45px; }
.foot p { line-height: 14px; margin-bottom: 23px; }
.foot a { display: block; line-height: 14px; padding-left: 52px; letter-spacing: 0.01em; }

/* Board page */
.main { flex: 1; padding: 23px 33px 0 32px; }
.crumbs { display: flex; gap: 8px; line-height: 16px; color: #9fadbc; letter-spacing: -0.017em; }
.titlerow { display: flex; justify-content: space-between; height: 62px; }
h1 { font-size: 19.4px; line-height: 27px; font-weight: 600; letter-spacing: -0.027em; margin-top: 1px; }
.goal { font-size: 9.6px; line-height: 12px; letter-spacing: -0.004em; color: #8696a7; }
.actions { display: flex; align-items: center; height: 27px; margin-top: 2px; }
.actions > svg { width: 16px; height: 16px; fill: none; stroke: #9fadbc; stroke-width: 1.5; margin-right: 12.500px; }
.actions > svg:nth-child(3) { margin-right: 6px; }
.left { font-size: 9.6px; letter-spacing: -0.02em; color: #8696a7; width: 80px; white-space: nowrap; }
.finish { width: 112px; height: 27px; font-size: 11.3px; }
.btn { background: #22272e; border-radius: 3px; color: #b6c2cf; display: flex; align-items: center; font-weight: 600; letter-spacing: -0.025em; }
.dots3 { width: 27px; height: 27px; margin-left: 7px; justify-content: center; }
.dots3 svg { width: 16px; height: 4px; fill: #b6c2cf; }
.filters { display: flex; align-items: center; height: 33px; margin-bottom: 27px; }
.fsearch { width: 100px; height: 32px; border: 1px solid #38414a; border-radius: 3px; background: #1a1e22; display: flex; align-items: center; justify-content: flex-end; padding-right: 8px; color: #9fadbc; }
.fsearch svg { width: 11px; height: 11px; }
.people { display: flex; margin-left: 11px; }
.people .av { width: 29px; height: 29px; border: 2px solid #1d2125; margin-right: -5px; font-size: 11px; font-weight: 600; }
.people .av:nth-child(1) { z-index: 2; }
.people .av:nth-child(2) { z-index: 1; }
.adduser { width: 26px; height: 26px; border-radius: 50%; background: #22272e; margin-left: 11px; display: flex; align-items: center; justify-content: center; }
.adduser svg { width: 16px; height: 16px; fill: #b6c2cf; }
.f { font-weight: 600; letter-spacing: -0.02em; display: flex; align-items: center; padding-top: 1px; white-space: nowrap; }
.f svg { width: 8px; height: 6px; }
.type { margin-left: 19.500px; width: 75px; justify-content: flex-start; }
.type svg { margin-left: 9px; }
.sprint { width: 98.500px; }
.sprint em { width: 14px; height: 14px; border-radius: 7px; background: #579dff; color: #161a1d; font-size: 9.4px; line-height: 14px; font-weight: 400; text-align: center; margin: 0 9px 0 4px; }
.group { margin-left: auto; font-size: 9.2px; letter-spacing: -0.035em; color: #8696a7; margin-right: 7px; }
.none { width: 77px; height: 26px; padding: 0 16px 0 10px; justify-content: space-between; margin-right: 4px; }
.none svg { width: 8px; height: 6px; }
.stats { width: 90px; height: 26px; padding-left: 11px; gap: 6px; }
.stats svg { width: 17px; height: 13px; fill: none; stroke: #b6c2cf; stroke-width: 1.6; }
.board { display: flex; align-items: flex-start; gap: 10px; }
.col { width: 225px; height: 580px; background: #101214; border-radius: 7px; padding: 0 4px; }
.col h5 { height: 45px; padding: 0 0 4px 8px; font-size: 9.5px; font-weight: 600; letter-spacing: 0; color: #8696a7; display: flex; align-items: center; }
.col.wide h5 { letter-spacing: 0.02em; }
.col h5 svg { width: 10px; height: 8px; margin-left: 12px; }
.card { background: #1d2125; border-radius: 3px; margin-bottom: 3.33px; padding: 11px 12px 11px 10px; box-shadow: 0 1px 1px rgba(3, 4, 4, .5); }
.card p { line-height: 16.67px; color: #b6c2cf; white-space: nowrap; letter-spacing: -0.012em; }
.cf { display: flex; align-items: center; height: 20px; margin-top: 8px; }
.ty { width: 12px; height: 12px; margin-right: 8px; }
.cf b { font-size: 9.8px; font-weight: 500; letter-spacing: -0.025em; color: #8c9bab; margin-right: auto; }
.cf em { width: 16px; height: 13px; border-radius: 7px; background: #282e33; color: #b6c2cf; font-size: 9.8px; line-height: 13px; text-align: center; margin-right: 8px; }
.tk { width: 9px; height: 7px; margin-right: 5.500px; }
.addcol { width: 27px; height: 27px; justify-content: center; }
.addcol svg { width: 15px; height: 15px; stroke: #b6c2cf; stroke-width: 1.6; }

/* Notifications */
.toasts { position: absolute; left: 118px; top: 893px; width: 333px; display: flex; flex-direction: column; gap: 14px; }
.toast { height: 87px; background: #22272b; border-radius: 3px; box-shadow: 0 0 1px #4a535c, 0 6px 10px rgba(3, 4, 4, .45); display: flex; padding: 15px 19px 0 14px; color: #9fadbc; }
.toast .ok { width: 18px; height: 18px; margin-right: 14px; }
.toast > div { flex: 1; }
.toast strong { display: block; font-weight: 600; line-height: 18px; letter-spacing: -0.018em; }
.toast p { line-height: 16.67px; margin-top: 8px; white-space: nowrap; letter-spacing: -0.012em; }
.tc { width: 9px; height: 9px; margin-top: 4px; }

/* Taskbar */
.taskbar { height: 60px; background: #222; border-top: 1px solid #484848; display: flex; align-items: center; color: #fff; font-size: 14.4px; letter-spacing: -0.008em; }
.weather { display: flex; align-items: center; width: 255px; padding-left: 25px; margin-top: -2px; }
.weather svg { width: 30px; height: 30px; margin: -2px 9px 0 0; }
.weather span, .time span { display: block; line-height: 20px; }
.weather .dim { color: #c8c8c8; }
.start { width: 29px; height: 29px; }
.wsearch { width: 274px; height: 40px; margin-left: 18px; border-radius: 20px; background: #383838; border: 1px solid #414141; display: flex; align-items: center; padding: 0 6px 0 12px; color: #d0d0d0; font-size: 16.4px; margin-top: -1px; }
.wsearch .m { width: 20px; height: 20px; margin-right: 12px; color: #e6e6e6; }
.wsearch span { flex: 1; }
.deco { width: 62px; height: 28px; }
.apps { display: flex; margin-left: 2px; }
.apps span { width: 55px; height: 50px; display: flex; align-items: center; justify-content: center; background-repeat: no-repeat; background-position: 50% 46px; }
.apps svg { width: 30px; height: 30px; }
.apps .run { background-image: radial-gradient(#9a9a9a, #9a9a9a); background-size: 8px 3px; }
.apps .act { width: 50px; margin: 0 2.5px; border-radius: 4px; background: linear-gradient(#ff9aa5, #ff9aa5) 50% 100% / 29px 3px no-repeat #303030; }
.adobe { width: 28px; height: 27px; border-radius: 5px; font: 700 15px/25px "Open Sans", sans-serif; letter-spacing: -0.02em; text-align: center; margin-top: -3px; }
.ai { background: #330000; color: #ff9a00; }
.pr { background: #00005b; color: #9999ff; }
.xd { width: 30px; height: 30px; line-height: 30px; background: #470137; color: #ff61f6; margin-top: 0; }
.ps { background: #001e36; color: #31a8ff; }
.up { width: 14px; height: 8px; margin-left: 28px; }
.lang { margin-left: 28px; width: 50px; letter-spacing: -0.03em; }
.tray { width: 20px; height: 16px; margin-right: 10px; }
.wifi, .vol { margin-left: -1px; margin-right: 10.500px; }
.time { text-align: right; width: 88px; margin-top: -2px; letter-spacing: -0.002em; }
.bell { width: 18px; height: 20px; margin-left: 11px; }
```
